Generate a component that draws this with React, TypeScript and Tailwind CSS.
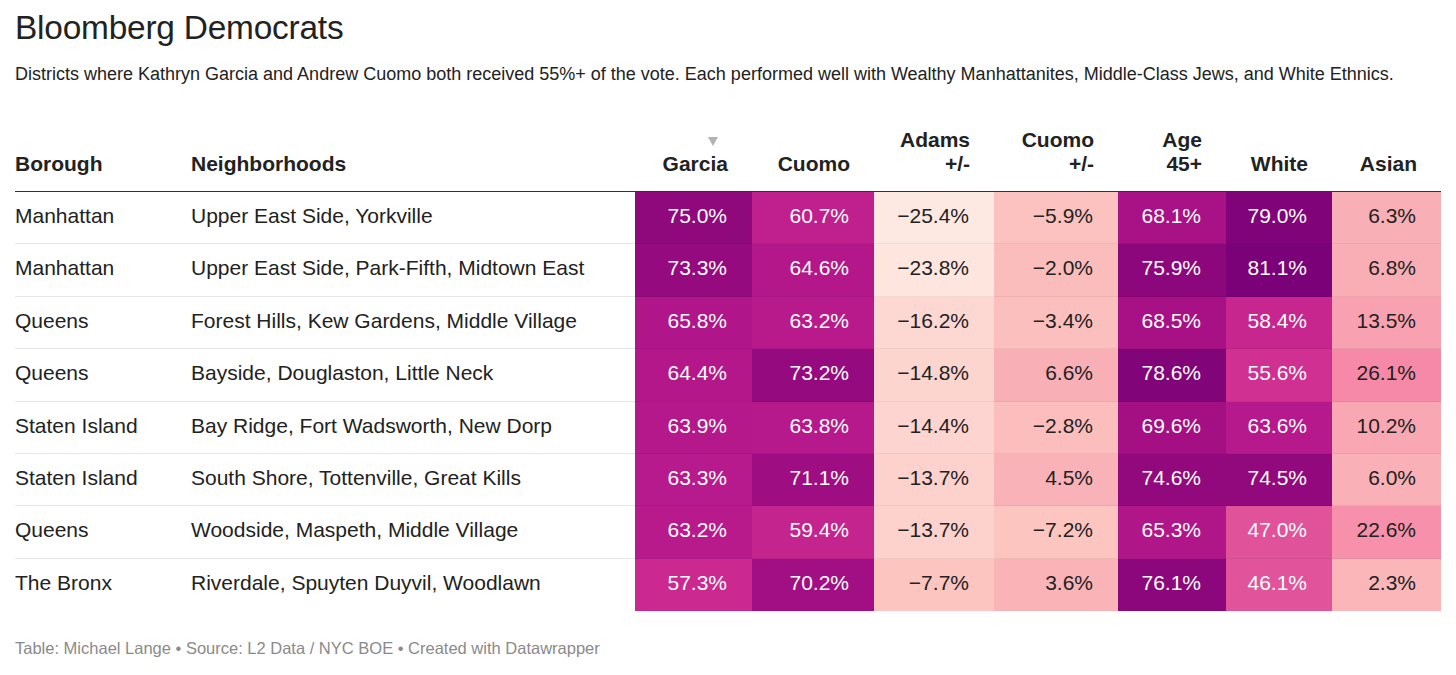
import React from "react";

type Row = [string, string, number, number, number, number, number, number, number];

const rows: Row[] = [
  ["Manhattan", "Upper East Side, Yorkville", 75.0, 60.7, -25.4, -5.9, 68.1, 79.0, 6.3],
  ["Manhattan", "Upper East Side, Park-Fifth, Midtown East", 73.3, 64.6, -23.8, -2.0, 75.9, 81.1, 6.8],
  ["Queens", "Forest Hills, Kew Gardens, Middle Village", 65.8, 63.2, -16.2, -3.4, 68.5, 58.4, 13.5],
  ["Queens", "Bayside, Douglaston, Little Neck", 64.4, 73.2, -14.8, 6.6, 78.6, 55.6, 26.1],
  ["Staten Island", "Bay Ridge, Fort Wadsworth, New Dorp", 63.9, 63.8, -14.4, -2.8, 69.6, 63.6, 10.2],
  ["Staten Island", "South Shore, Tottenville, Great Kills", 63.3, 71.1, -13.7, 4.5, 74.6, 74.5, 6.0],
  ["Queens", "Woodside, Maspeth, Middle Village", 63.2, 59.4, -13.7, -7.2, 65.3, 47.0, 22.6],
  ["The Bronx", "Riverdale, Spuyten Duyvil, Woodlawn", 57.3, 70.2, -7.7, 3.6, 76.1, 46.1, 2.3],
];

const stops: [number, [number, number, number]][] = [
  [-26, [254, 234, 227]],
  [-14, [253, 211, 206]],
  [-7.5, [252, 197, 192]],
  [6.5, [249, 175, 182]],
  [26, [247, 137, 168]],
  [47, [224, 82, 154]],
  [57, [204, 42, 144]],
  [64, [181, 24, 139]],
  [70, [163, 14, 131]],
  [76, [139, 7, 123]],
  [81, [122, 1, 119]],
];

function colorFor(v: number): string {
  if (v <= stops[0][0]) return `rgb(${stops[0][1].join(",")})`;
  for (let i = 0; i < stops.length - 1; i++) {
    const [a, ca] = stops[i];
    const [b, cb] = stops[i + 1];
    if (v >= a && v <= b) {
      const t = (v - a) / (b - a);
      const c = ca.map((x, k) => Math.round(x + (cb[k] - x) * t));
      return `rgb(${c.join(",")})`;
    }
  }
  return `rgb(${stops[stops.length - 1][1].join(",")})`;
}

function fmt(v: number): string {
  const s = Math.abs(v).toFixed(1) + "%";
  return v < 0 ? "\u2212" + s : s;
}

const gridCols =
  "grid grid-cols-[176px_444px_117px_122px_120px_124px_108px_106px_109px]";

function HeadCell({ lines, sort }: { lines: string[]; sort?: boolean }) {
  return (
    <div className="flex flex-col items-end justify-end pr-[24px] pb-[15px] text-right">
      {sort && (
        <div className="mr-[10px] mb-[6px]">
          <svg width="10" height="9" viewBox="0 0 10 9">
            <polygon points="0,0 10,0 5,9" fill="#b3b3b3" />
          </svg>
        </div>
      )}
      {lines.map((l, i) => (
        <div key={i} className="leading-[24px]">
          {l}
        </div>
      ))}
    </div>
  );
}

export default function App() {
  return (
    <div
      className="bg-white w-[1456px] h-[675px] px-[15px] text-[#222]"
      style={{ fontFamily: '"Liberation Sans", Arial, Helvetica, sans-serif' }}
    >
      <h1 className="pt-[9px] text-[33.4px] leading-[38px] text-[#222] font-normal tracking-[-0.2px]">
        Bloomberg Democrats
      </h1>
      <p className="mt-[16px] text-[18px] leading-[22px] text-[#222]">
        Districts where Kathryn Garcia and Andrew Cuomo both received 55%+ of the vote. Each performed well with Wealthy Manhattanites, Middle-Class Jews, and White Ethnics.
      </p>

      <div className="mt-[26px] w-[1426px]">
        <div className={`${gridCols} h-[81px] border-b border-[#333] text-[21px] font-bold text-[#222]`}>
          <div className="flex items-end pb-[15px] leading-[24px]">Borough</div>
          <div className="flex items-end pb-[15px] leading-[24px]">Neighborhoods</div>
          <HeadCell lines={["Garcia"]} sort />
          <HeadCell lines={["Cuomo"]} />
          <HeadCell lines={["Adams", "+/-"]} />
          <HeadCell lines={["Cuomo", "+/-"]} />
          <HeadCell lines={["Age", "45+"]} />
          <HeadCell lines={["White"]} />
          <HeadCell lines={["Asian"]} />
        </div>

        {rows.map((r, ri) => {
          const last = ri === rows.length - 1;
          return (
            <div key={ri} className={`${gridCols} h-[52.4px] text-[21px]`}>
              <div
                className={`flex items-center pb-[4px] ${last ? "" : "border-b border-[#e5e5e5]"}`}
              >
                {r[0]}
              </div>
              <div
                className={`flex items-center pb-[4px] ${last ? "" : "border-b border-[#e5e5e5]"}`}
              >
                {r[1]}
              </div>
              {r.slice(2).map((v, ci) => {
                const n = v as number;
                const light = n < 35;
                return (
                  <div
                    key={ci}
                    className={`flex items-center justify-end pr-[25px] pb-[4px] ${
                      last ? "" : "border-b border-black/[0.05]"
                    } ${light ? "text-[#222]" : "text-white"}`}
                    style={{ backgroundColor: colorFor(n) }}
                  >
                    {fmt(n)}
                  </div>
                );
              })}
            </div>
          );
        })}
      </div>

      <p className="mt-[26px] text-[16.5px] leading-[22px] text-[#8a8a8a]">
        Table: Michael Lange • Source: L2 Data / NYC BOE • Created with Datawrapper
      </p>
    </div>
  );
}
